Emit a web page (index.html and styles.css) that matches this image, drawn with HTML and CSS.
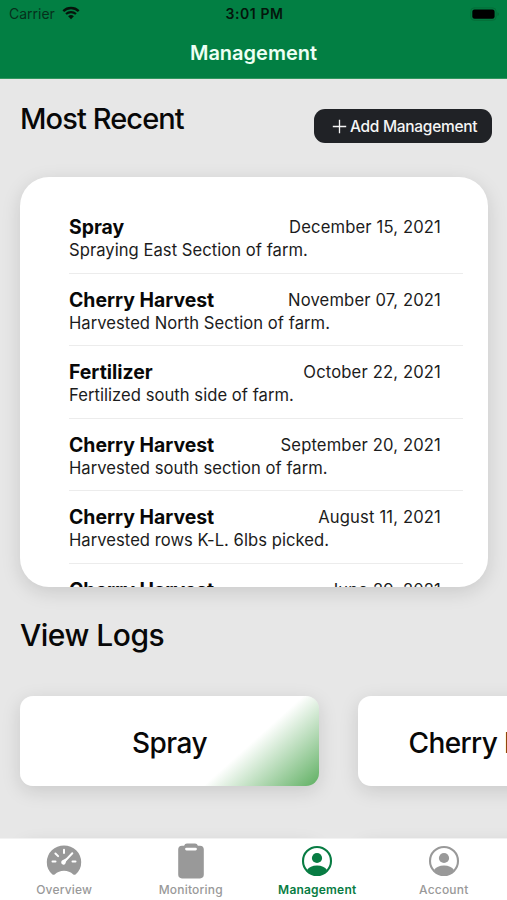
FILE: index.html
```html
<!DOCTYPE html>
<html lang="en">
<head>
<meta charset="utf-8">
<title>Management</title>
<link rel="stylesheet" href="styles.css">
</head>
<body>
<div class="app">
  <header class="header">
    <div class="status">
      <div class="carrier"><span>Carrier</span>
        <svg class="wifi" viewBox="0 0 18 14" width="18" height="14"><path d="M1.3 5.1a11.2 11.2 0 0 1 15.4 0" fill="none" stroke="#06140b" stroke-width="2.4"/><path d="M4 8.1a7.3 7.3 0 0 1 10 0" fill="none" stroke="#06140b" stroke-width="2.1"/><path d="M6.1 10.3a4.2 4.2 0 0 1 5.8 0L9 13.3z" fill="#06140b"/></svg>
      </div>
      <div class="time">3:01 PM</div>
      <div class="power">
        <svg viewBox="0 0 30 14" width="30" height="14"><rect x=".7" y=".9" width="25.4" height="12.4" rx="3.5" fill="none" stroke="#056d38"/><rect x="2.3" y="2.5" width="22.3" height="9.2" rx="2.2" fill="#000"/><path d="M27.4 5.2q1.6.5 1.6 1.9t-1.6 1.9z" fill="#056d38"/></svg>
      </div>
    </div>
    <h1 class="title">Management</h1>
  </header>
  <main class="content">
    <section class="recent-head">
      <h2 class="heading recent-title">Most Recent</h2>
      <button class="add"><svg viewBox="0 0 15 15" width="15" height="15"><path d="M7.5.8v13.4M.8 7.5h13.4" stroke="#f5f5f5" stroke-width="1.3" fill="none"/></svg><span>Add Management</span></button>
    </section>
    <section class="card recent">
      <article class="entry"><div class="row"><b>Spray</b><time>December 15, 2021</time></div><p>Spraying East Section of farm.</p></article>
      <article class="entry"><div class="row"><b>Cherry Harvest</b><time>November 07, 2021</time></div><p>Harvested North Section of farm.</p></article>
      <article class="entry"><div class="row"><b>Fertilizer</b><time>October 22, 2021</time></div><p>Fertilized south side of farm.</p></article>
      <article class="entry"><div class="row"><b>Cherry Harvest</b><time>September 20, 2021</time></div><p>Harvested south section of farm.</p></article>
      <article class="entry"><div class="row"><b>Cherry Harvest</b><time>August 11, 2021</time></div><p>Harvested rows K-L. 6lbs picked.</p></article>
      <article class="entry"><div class="row"><b>Cherry Harvest</b><time>June 29, 2021</time></div></article>
    </section>
    <h2 class="heading logs-title">View Logs</h2>
    <section class="logs">
      <div class="card log tinted">Spray</div>
      <div class="card log cherry">Cherry Harvest</div>
      <div class="card log"></div>
      <div class="card log"></div>
    </section>
  </main>
  <nav class="tabs">
    <a class="tab"><svg viewBox="0 0 36 36" width="36" height="36"><path d="M6.200 31.200A16 16 0 0 1 .8 19a17.200 16.500 0 0 1 34.400 0 16 16 0 0 1-5.400 12.200q-1.300 1-2.500.2a14 14 0 0 0-18.600 0q-1.300.8-2.500-.2z" fill="#999"/><g stroke="#fff" stroke-width="2" stroke-linecap="round"><path d="M18 6.700v3.200M9.400 10.500l2.700 2.600M6.500 18.500h3M26.500 18.500h3M19 18l7.300-7.800"/></g><path d="M16.400 17.300l4.500-2.400-1.100 4.600a2.300 2.300 0 1 1-3.400-2.200z" fill="#fff"/></svg><span>Overview</span></a>
    <a class="tab"><svg class="clipboard" viewBox="0 0 36 36" width="36" height="36"><path d="M9 2.800h2.100Q11.800.5 14 .5h8q2.200 0 2.900 2.300H27q3.800 0 3.800 3.800v25q0 3.800-3.800 3.800H9q-3.800 0-3.800-3.800v-25Q5.200 2.800 9 2.800z" fill="#999"/><rect x="12.100" y="4.700" width="11.800" height="2.800" rx="1.400" fill="#fff"/></svg><span>Monitoring</span></a>
    <a class="tab active"><svg viewBox="0 0 36 36" width="36" height="36"><circle cx="18" cy="18" r="14" fill="none" stroke="currentColor" stroke-width="2.100"/><circle cx="18" cy="15" r="5.100" fill="currentColor"/><path d="M8 27Q11 22.500 18 22.500T28 27Q24 32 18 32T8 27z" fill="currentColor"/></svg><span>Management</span></a>
    <a class="tab"><svg viewBox="0 0 36 36" width="36" height="36"><circle cx="18" cy="18" r="14" fill="none" stroke="currentColor" stroke-width="2.100"/><circle cx="18" cy="15" r="5.100" fill="currentColor"/><path d="M8 27Q11 22.500 18 22.500T28 27Q24 32 18 32T8 27z" fill="currentColor"/></svg><span>Account</span></a>
  </nav>
</div>
</body>
</html>
```
FILE: styles.css
```css
* { box-sizing: border-box; }
body { margin: 0; font-family: Inter, "Liberation Sans", sans-serif; color: #080808; }
h1, h2, p { margin: 0; font-weight: 500; }
.app { width: 507px; height: 900px; overflow: hidden; display: flex; flex-direction: column; background: #e7e7e7; }
.header { height: 79px; flex: none; background: #027f43; border-bottom: 1px solid #32965f; }
.status { height: 27px; display: grid; grid-template-columns: 1fr 1fr 1fr; align-items: center; padding: 0 7px 0 9px; color: #06301b; font-size: 14px; }
.carrier { display: flex; align-items: center; gap: 7px; }
.wifi { margin-top: -2px; }
.time { text-align: center; font-weight: 600; font-size: 14px; letter-spacing: .6px; color: #04160c; }
.power { display: flex; justify-content: flex-end; }
.title { text-align: center; color: #edfff4; font-size: 20px; line-height: 52px; font-weight: 600; }
.content { flex: 1; min-height: 0; overflow: hidden; }
.recent-head { display: flex; justify-content: space-between; padding: 23px 15px 0 20px; height: 98px; }
.heading { line-height: 32px; font-weight: 500; }
.recent-title { font-size: 29px; line-height: 33px; letter-spacing: -.9px; }
.logs-title { margin: 32px 0 0 20px; font-size: 30px; letter-spacing: -.5px; }
.add { margin: 7px 0 0; width: 178px; height: 34px; border: 0; border-radius: 11px; background: #202226; color: #f5f5f5; font: 500 15.5px Inter, sans-serif; letter-spacing: -.3px; display: flex; align-items: center; padding: 0 0 0 18px; gap: 3px; white-space: nowrap; }
.add svg { flex: none; }
.card { background: #fff; box-shadow: 0 5px 19px rgba(0, 0, 0, .13); }
.recent { margin: 0 19px 0 20px; height: 410px; border-radius: 29px; padding: 24px 25px 0 49px; overflow: hidden; }
.entry { height: 72.5px; border-bottom: 1.5px solid #ececec; padding-top: 15px; }
.row { display: flex; justify-content: space-between; align-items: center; padding-right: 22px; height: 22.3px; line-height: 24px; }
.row b { font-size: 19.4px; font-weight: 700; }
.row time { font-size: 16.6px; letter-spacing: .15px; color: #1c1c1c; }
.entry p { font-size: 16.6px; letter-spacing: .04px; font-weight: 400; line-height: 24px; color: #1c1c1c; }
.logs { margin: 45px 0 0 20px; display: grid; grid-template-columns: 299px 299px; gap: 55px 39px; }
.log { height: 90px; border-radius: 13px; display: flex; align-items: center; justify-content: center; font-size: 28px; letter-spacing: -.5px; font-weight: 500; white-space: nowrap; padding-top: 4px; }
.cherry { letter-spacing: -.6px; padding-right: 2px; }
.tinted { background: linear-gradient(138deg, #fff 71%, #5eaf61 100%); }
.tabs { height: 62px; flex: none; background: #fff; border-top: 1px solid #f2f2f2; display: grid; grid-template-columns: repeat(4, 1fr); position: relative; padding-left: 1px; }
.tab { display: flex; flex-direction: column; align-items: center; padding-top: 4px; color: #999; font-size: 12px; font-weight: 500; letter-spacing: .2px; line-height: 17px; gap: 2px; }
.clipboard { margin-top: -.5px; margin-bottom: .5px; }
.active { color: #087c43; font-weight: 600; }
```
